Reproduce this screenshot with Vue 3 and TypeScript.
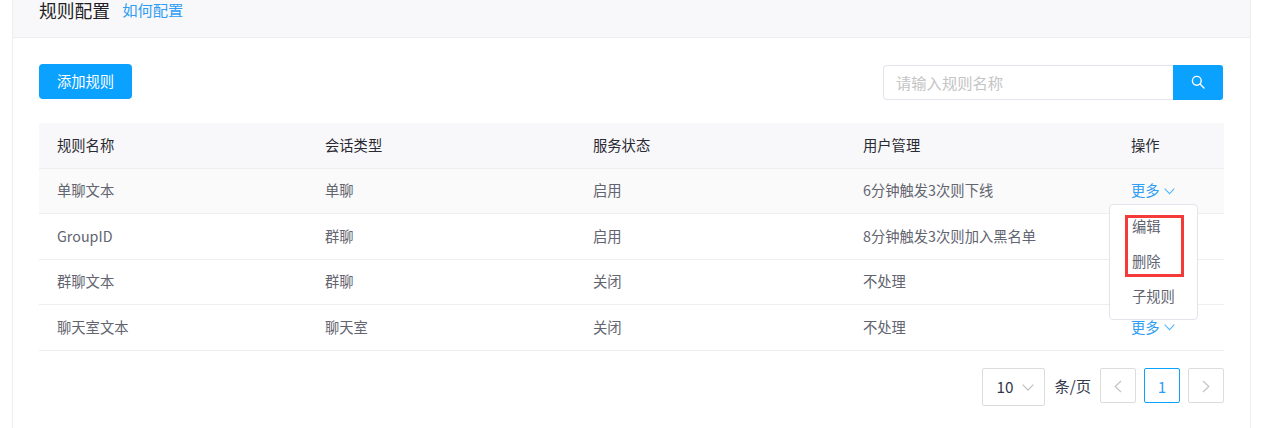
<script setup lang="ts">
interface Row { name: string; type: string; status: string; user: string; showMore: boolean }
const rows: Row[] = [
  { name: '单聊文本', type: '单聊', status: '启用', user: '6分钟触发3次则下线', showMore: true },
  { name: 'GroupID', type: '群聊', status: '启用', user: '8分钟触发3次则加入黑名单', showMore: false },
  { name: '群聊文本', type: '群聊', status: '关闭', user: '不处理', showMore: false },
  { name: '聊天室文本', type: '聊天室', status: '关闭', user: '不处理', showMore: true },
]
</script>

<template>
  <div class="page">
    <div class="card">
      <header class="head">
        <span class="title">规则配置</span>
        <a class="how">如何配置</a>
      </header>
      <div class="body">
        <div class="toolbar">
          <button class="add">添加规则</button>
          <div class="search">
            <div class="input">请输入规则名称</div>
            <button class="go" aria-label="搜索">
              <svg width="14" height="14" viewBox="0 0 14 14" fill="none" stroke="#fff" stroke-width="1.4">
                <circle cx="5.8" cy="5.8" r="4.4" />
                <path d="M9 9l4 4" stroke-linecap="round" />
              </svg>
            </button>
          </div>
        </div>
        <div class="table">
          <div class="tr th">
            <div>规则名称</div><div>会话类型</div><div>服务状态</div><div>用户管理</div><div>操作</div>
          </div>
          <div v-for="(r, i) in rows" :key="r.name" class="tr td" :class="{ hover: i === 0 }">
            <div>{{ r.name }}</div>
            <div>{{ r.type }}</div>
            <div>{{ r.status }}</div>
            <div>{{ r.user }}</div>
            <div>
              <a v-if="r.showMore" class="more">更多
                <svg class="chev" width="11" height="7" viewBox="0 0 11 7" fill="none" stroke="#55b8fb" stroke-width="1.1">
                  <path d="M.7.7l4.8 5 4.8-5" />
                </svg>
              </a>
            </div>
          </div>
          <div class="menu">
            <div class="item">编辑</div>
            <div class="item">删除</div>
            <div class="item">子规则</div>
          </div>
          <div class="mark"></div>
        </div>
        <div class="pager">
          <div class="size">
            <span>10</span>
            <svg class="chev" width="12" height="7" viewBox="0 0 12 7" fill="none" stroke="#bdbdbd" stroke-width="1.1">
              <path d="M.7.7l5.3 5.4L11.3.7" />
            </svg>
          </div>
          <span class="unit">条/页</span>
          <div class="pg">
            <svg class="arrow" width="8" height="13" viewBox="0 0 8 13" fill="none" stroke="#c4c4c4" stroke-width="1.2">
              <path d="M7 1L1.2 6.5 7 12" />
            </svg>
          </div>
          <div class="pg cur">1</div>
          <div class="pg">
            <svg class="arrow" width="8" height="13" viewBox="0 0 8 13" fill="none" stroke="#c4c4c4" stroke-width="1.2">
              <path d="M1 1l5.8 5.5L1 12" />
            </svg>
          </div>
        </div>
      </div>
    </div>
  </div>
</template>

<style>
html, body { margin: 0; background: #fff; overflow: hidden; }
</style>

<style scoped>
.page {
  width: 1267px;
  height: 428px;
  padding-left: 12px;
  box-sizing: border-box;
  font-family: "Noto Sans CJK SC", "Noto Sans", sans-serif;
  overflow: hidden;
}
.card {
  width: 1239px;
  height: 428px;
  box-sizing: border-box;
  border-left: 1px solid #eeeef1;
  border-right: 1px solid #eeeef1;
}
.head {
  height: 38px;
  box-sizing: border-box;
  background: #f8f8fa;
  border-bottom: 1px solid #eeeef2;
  padding-left: 26px;
  display: flex;
  align-items: flex-start;
  gap: 12px;
}
.title { font-size: 17.8px; line-height: 20px; color: #1f1f26; }
.how { font-size: 15.3px; line-height: 19px; color: #2f9df4; }
.body { padding: 26px 26px 0; }
.toolbar { display: flex; justify-content: space-between; align-items: flex-start; height: 37px; }
.add {
  width: 93px;
  height: 35px;
  border: 0;
  border-radius: 4px;
  background: #0aa1ff;
  color: #fff;
  font: 14.3px "Noto Sans CJK SC", sans-serif;
  padding: 0 0 2px;
}
.search { display: flex; width: 340px; height: 35px; margin: 1px 1px 0 0; }
.input {
  flex: 1;
  box-sizing: border-box;
  border: 1px solid #e3e4ec;
  border-right: 0;
  border-radius: 4px 0 0 4px;
  padding-left: 12px;
  font-size: 15.3px;
  line-height: 32px;
  color: #c4c4c4;
}
.go {
  width: 50px;
  border: 0;
  padding: 0 0 1px;
  background: #0aa1ff;
  border-radius: 0 3px 3px 0;
  display: flex;
  align-items: center;
  justify-content: center;
}
.table { position: relative; margin-top: 22px; width: 1185px; }
.tr {
  display: grid;
  grid-template-columns: 268px 268px 270px 268px 111px;
  align-items: center;
  border-bottom: 1px solid #eeeef0;
  box-sizing: border-box;
  font-size: 14.3px;
  padding-bottom: 3px;
}
.tr > div { padding-left: 18px; }
.th { height: 46px; background: #f8f8fa; color: #2a2a33; }
.td { color: #62646f; }
.td:nth-child(2n) { height: 45px; }
.td:nth-child(2n + 1) { height: 46px; }
.td.hover { background: #fafafa; }
.more { color: #2f9df4; display: inline-flex; align-items: center; gap: 4px; }
.more .chev { margin-top: 3px; }
.size .chev { margin-top: 2px; }
.arrow { margin-top: 2px; }
.menu {
  position: absolute;
  left: 1070px;
  top: 81px;
  width: 89px;
  height: 116px;
  box-sizing: border-box;
  background: #fff;
  border: 1px solid #e3e4ec;
  border-radius: 4px;
  padding-top: 3px;
}
.item { height: 35px; line-height: 35px; padding-left: 22px; font-size: 14.3px; color: #62646f; }
.mark {
  position: absolute;
  left: 1086px;
  top: 92px;
  width: 59px;
  height: 62px;
  box-sizing: border-box;
  border: 3px solid #f53a3a;
}
.pager { display: flex; align-items: flex-start; justify-content: flex-end; margin-top: 17px; width: 1185px; height: 38px; }
.size {
  width: 63px;
  height: 38px;
  box-sizing: border-box;
  border: 1px solid #dcdcdc;
  border-radius: 2px;
  display: flex;
  align-items: center;
  padding: 0 0 2px 13px;
  gap: 9px;
  font-size: 15.3px;
  color: #33384a;
}
.unit { font-size: 15.3px; line-height: 34px; color: #33384a; margin: 0 9px 0 9px; }
.pg {
  width: 36px;
  height: 35px;
  box-sizing: border-box;
  border: 1px solid #dcdcdc;
  border-radius: 2px;
  display: flex;
  align-items: center;
  justify-content: center;
  margin-left: 8px;
  font-size: 15.3px;
  color: #2f9df4;
}
.unit + .pg { margin-left: 0; }
.cur { border-color: #0aa1ff; }
</style>
